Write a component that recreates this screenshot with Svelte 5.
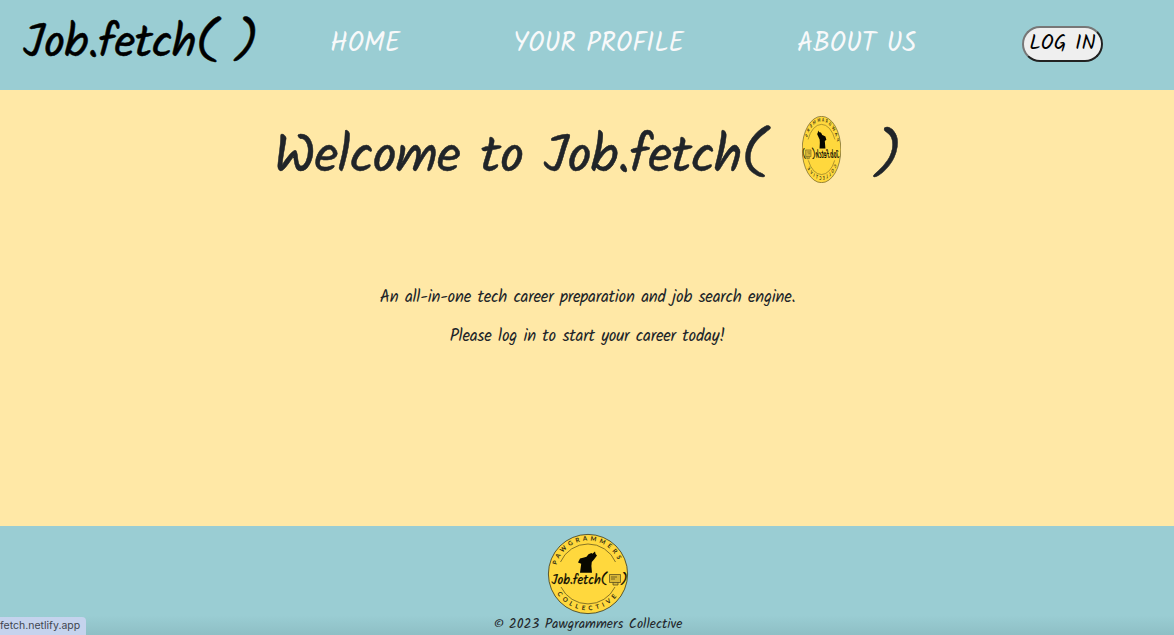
<script>
  const links = ['HOME', 'YOUR PROFILE', 'ABOUT US'];
</script>

{#snippet badge(id, kind)}
  <svg class={kind} viewBox="0 0 80 80" preserveAspectRatio="none">
    <defs>
      <path id="{id}-top" d="M8.5 31 A32.5 32.5 0 0 1 71.5 31" />
      <path id="{id}-bottom" d="M9.2 59.5 A36.7 36.7 0 0 0 70.8 59.5" />
    </defs>
    <circle cx="40" cy="40" r="39.6" fill="#ffd83d" stroke="#3c3717" stroke-width=".8" />
    <path d="M12.5 28 A30 30 0 0 1 67.5 28 M13 53 A30 30 0 0 0 67 53" fill="none" stroke="#685a20" stroke-width=".8" />
    <text class="ring"><textPath href="#{id}-top" textLength="80">PAWGRAMMERS</textPath></text>
    <text class="ring"><textPath href="#{id}-bottom" textLength="69">COLLECTIVE</textPath></text>
    <path d="M30 28.4 L32 24.4 L36 23.4 L38.5 22.8 L40.5 20.2 L43.4 19 L44.4 19.8 L47 17.4 L47.6 20 L49 21.6 L46 25.4 L43.8 28 L43.4 32 L44 38.8 H32 L33.2 29.8 Z" fill="#080800" />
    <text class="word" x="3.5" y="50">Job.fetch(</text>
    <path d="M61.5 40.5 H72.5 V48.5 H61.5 Z M65 48.5 V51 H70 V48.5 M63 43 H69 M63 45 H67" fill="#d9b738" stroke="#4c431b" stroke-width=".7" />
    <text class="word" x="73" y="50">)</text>
  </svg>
{/snippet}

<div class="page">
  <header>
    <div class="brand">Job.fetch( )</div>
    <nav>
      {#each links as link}
        <a href="#top">{link}</a>
      {/each}
    </nav>
    <button>LOG IN</button>
  </header>
  <main>
    <h1>
      <span>Welcome to Job.fetch(</span>
      <span class="spin">{@render badge('small', 'coin')}</span>
      <span>)</span>
    </h1>
    <p>An all-in-one tech career preparation and job search engine.</p>
    <p>Please log in to start your career today!</p>
  </main>
  <footer>
    {@render badge('large', 'seal')}
    <small>© 2023 Pawgrammers Collective</small>
  </footer>
  <div class="status">fetch.netlify.app</div>
</div>

<style>
  :global(body) { margin: 0; overflow: hidden; }
  .page {
    position: relative;
    width: 1174px;
    height: 635px;
    display: flex;
    flex-direction: column;
    overflow: hidden;
    background: #ffe8a6;
    color: #212529;
    font-family: Kalam, Lato, cursive;
  }
  svg { display: block; overflow: visible; }
  header {
    height: 90px;
    display: flex;
    align-items: flex-start;
    background: #9acdd3;
  }
  .brand {
    width: 307px;
    padding: 9px 0 0 23px;
    color: #000;
    font-size: 46.2px;
    letter-spacing: -.7px;
    line-height: 72px;
    white-space: nowrap;
    -webkit-text-stroke: .5px #000;
  }
  nav { display: flex; gap: 113px; width: 692px; padding-top: 24px; }
  nav a { color: #f8f9fa; font-size: 26.4px; line-height: 41px; text-decoration: none; white-space: nowrap; }
  button {
    width: 81px;
    height: 36px;
    margin-top: 26px;
    padding: 0;
    border: 2px outset #777;
    border-radius: 18px;
    background: #efefef;
    color: #000;
    font: 21px/30px Kalam, Lato, cursive;
    white-space: nowrap;
  }
  main { flex: 1; display: flex; flex-direction: column; align-items: center; }
  h1 {
    display: flex;
    width: 626px;
    height: 76px;
    margin: 22px 0 97px;
    font-size: 53px;
    font-weight: 400;
    letter-spacing: -.86px;
    line-height: 92px;
    white-space: nowrap;
    -webkit-text-stroke: .5px #212529;
  }
  .spin { margin: 4px 34px 0 36px; transform: scaleX(-1); letter-spacing: 0; -webkit-text-stroke: 0; }
  .coin { width: 39px; height: 67px; }
  p { height: 24px; margin: 0 0 15px; padding-left: 1px; font-size: 16.8px; letter-spacing: -.25px; line-height: 26px; }
  footer {
    height: 101px;
    padding: 8px 0 0 2px;
    display: flex;
    flex-direction: column;
    align-items: center;
    background: linear-gradient(#9acdd3 82%, #8ebfc5);
  }
  .seal { width: 80px; height: 80px; flex: none; }
  small { font-size: 13.65px; line-height: 20px; }
  .ring { font-size: 6.2px; font-family: Lato, sans-serif; font-weight: 700; fill: #302b11; }
  .word { font-size: 12.7px; font-weight: 400; fill: #080800; stroke: #080800; stroke-width: .25; }
  .status {
    position: absolute;
    left: 0;
    bottom: 0;
    width: 86px;
    height: 18px;
    box-sizing: border-box;
    border-top-right-radius: 4px;
    background: #c5d3ed;
    color: #3f4650;
    font: 10.5px/18px Inter, sans-serif;
    white-space: nowrap;
  }
</style>
